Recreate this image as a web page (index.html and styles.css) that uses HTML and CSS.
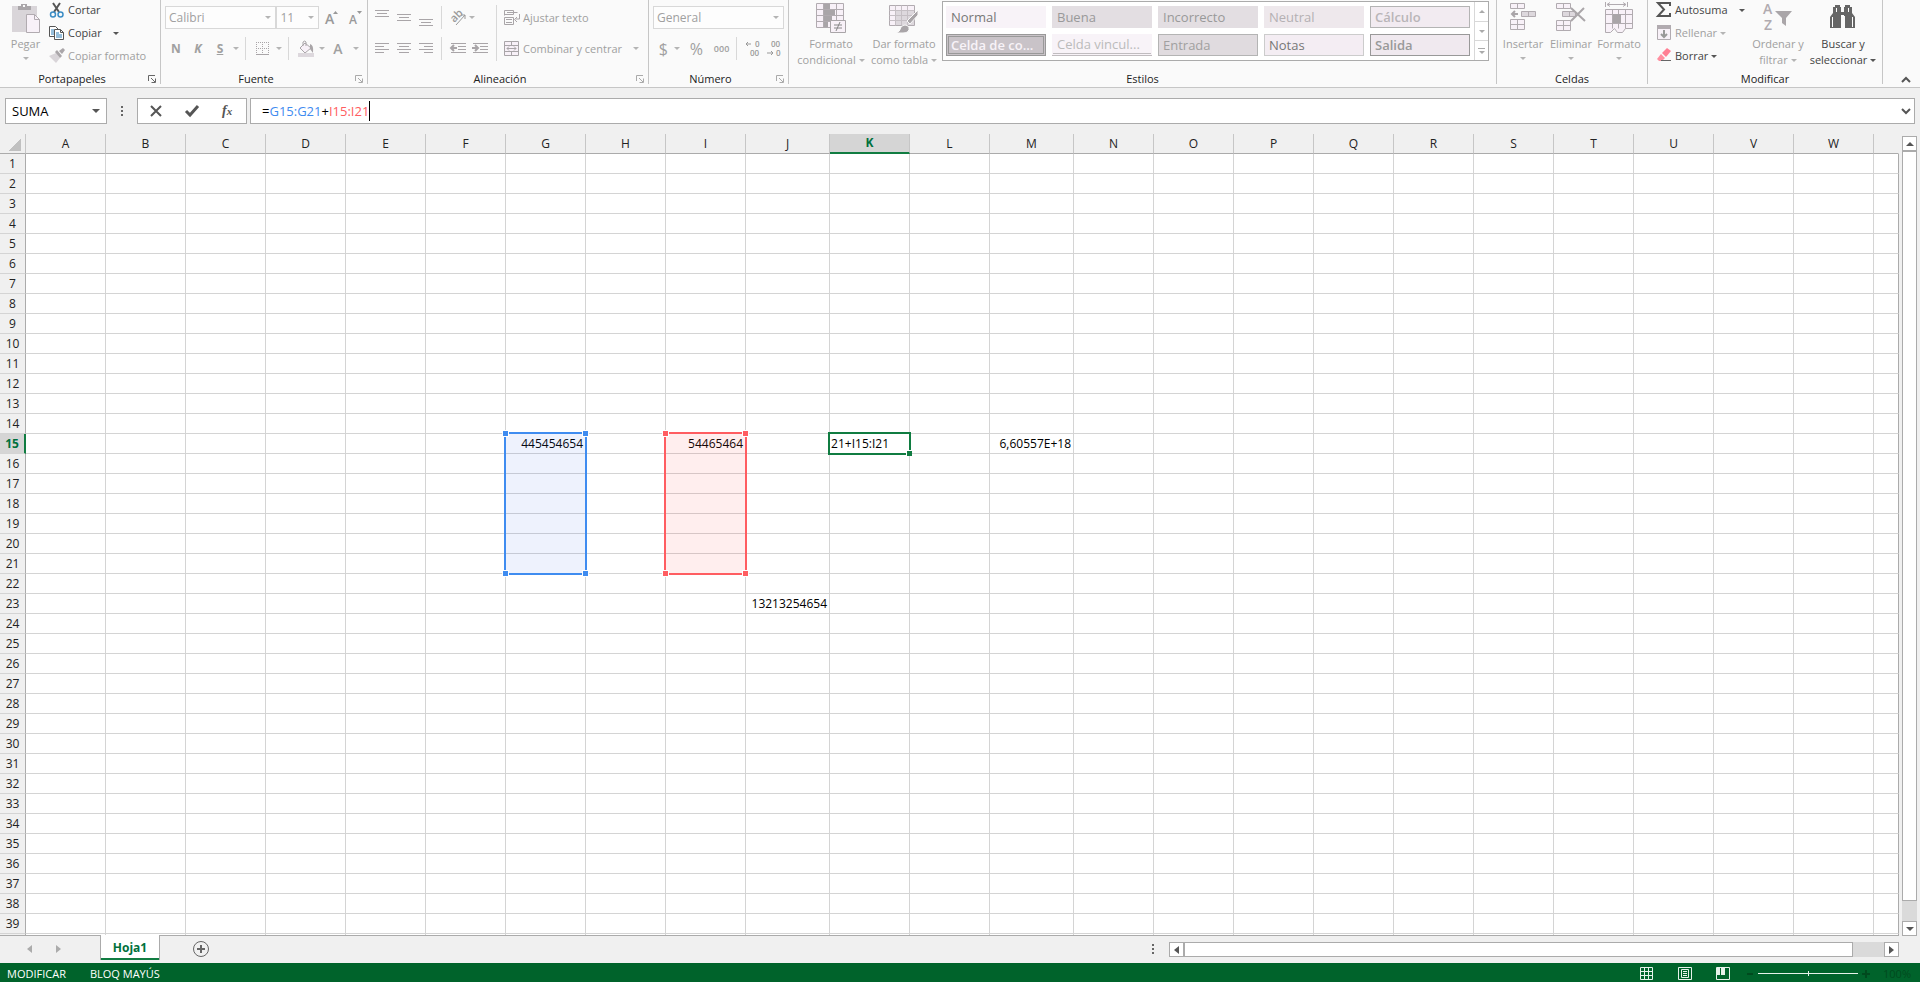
FILE: index.html
```html
<!DOCTYPE html>
<html lang="es">
<head>
<meta charset="utf-8">
<title>Hoja de cálculo</title>
<link rel="stylesheet" href="styles.css">
</head>
<body>
<header class="ribbon">
  <section class="group clipboard">
    <div class="group-body">
      <button class="big" disabled>
        <svg width="30" height="31" viewBox="0 0 30 31"><path d="M1 3h25v26H1z" fill="#d9d5d9"/><path d="M7 7V3h3V1h6v2h4v4z" fill="#aaa6a9"/><path d="M12 2h2v2h-2z" fill="#fafafa"/><path d="M15.500 11.500h8l5 5v13h-13z" fill="#f8f1f8" stroke="#b1abb0"/><path d="M23.500 11.500v5h5" fill="none" stroke="#b1abb0"/></svg>
        <span>Pegar</span><i class="caret"></i>
      </button>
      <div class="rows">
        <button class="tool">
          <svg width="16" height="16" viewBox="0 0 16 16" fill="none"><path d="M4 1l6 9M11 1L5 10" stroke="#555" stroke-width="2"/><circle cx="4" cy="12.500" r="2.500" stroke="#3c8dc5" stroke-width="1.500"/><circle cx="11.500" cy="12.500" r="2.500" stroke="#3c8dc5" stroke-width="1.500"/></svg>
          <span>Cortar</span></button>
        <button class="tool">
          <svg width="16" height="16" viewBox="0 0 16 16" fill="#fff" stroke="#555"><path d="M.500 1.500h6l3 3v7h-9z"/><path d="M2 5h3M2 7h3M2 9h3" stroke="#2f7fb8"/><path d="M5.500 4.500h6l3 3v7h-9z"/><path d="M11.500 4.500v3h3" fill="none"/><path d="M7 8h3M7 10h6M7 12h6" stroke="#2f7fb8"/></svg>
          <span>Copiar</span><i class="caret spaced"></i></button>
        <button class="tool" disabled>
          <svg width="16" height="16" viewBox="0 0 16 16"><path d="M0 8l7-3 4 5-4 5z" fill="#d9d5d9"/><path d="M6 4l2-2 5 6-2 2zM10 3l4-3 2 2-3 4z" fill="#aaa6a9"/></svg>
          <span>Copiar formato</span></button>
      </div>
    </div>
    <footer><h2>Portapapeles</h2><button class="launch on" aria-label="Opciones de portapapeles"><svg width="8" height="8" viewBox="0 0 8 8" fill="none" stroke="currentColor"><path d="M.500 6V.500H7M3 3l4 4M7.500 3.500v4h-4"/></svg></button></footer>
  </section>

  <section class="group font">
    <div class="group-body two">
      <div class="line">
        <label class="combo w-font"><select disabled aria-label="Fuente"><option>Calibri</option></select><i class="caret"></i></label>
        <label class="combo w-size"><select disabled aria-label="Tamaño"><option>11</option></select><i class="caret"></i></label>
        <button class="icon wide" disabled aria-label="Aumentar fuente"><svg width="16" height="16" viewBox="0 0 16 16"><text x="1" y="14" class="g16">A</text><path d="M9 4l2.500-3L14 4z" fill="#999"/></svg></button>
        <button class="icon" disabled aria-label="Reducir fuente"><svg width="16" height="16" viewBox="0 0 16 16"><text x="1" y="14" class="g13">A</text><path d="M9 1l2.500 3L14 1z" fill="#999"/></svg></button>
      </div>
      <div class="line">
        <button class="icon letter" disabled><b>N</b></button>
        <button class="icon letter" disabled><b><em>K</em></b></button>
        <button class="icon letter" disabled><b><u>S</u></b></button>
        <i class="caret"></i><i class="sep"></i>
        <button class="icon" disabled aria-label="Bordes"><svg width="14" height="14" viewBox="0 0 14 14" stroke="#a9a5a8" fill="none"><path d="M.500 0v13M12.500 0v13M6.500 0v13M0 .500h13M0 6.500h13" stroke-dasharray="1 1"/><path d="M0 12.500h13"/></svg></button>
        <i class="caret"></i><i class="sep"></i>
        <button class="icon" disabled aria-label="Color de relleno"><svg width="16" height="17" viewBox="0 0 16 17"><path d="M7 3l6 5-6 5-5-5z" fill="#f8f1f8" stroke="#a9a5a8"/><path d="M5 6V2q2-2 3 0v4" fill="none" stroke="#a9a5a8"/><path d="M12 4q4 1 3 9l-3-4z" fill="#a9a5a8"/><path d="M0 13h16v4H0z" fill="#ddd8dd"/></svg></button>
        <i class="caret"></i>
        <button class="icon wide" disabled aria-label="Color de fuente"><b class="color-a">A</b></button>
        <i class="caret"></i>
      </div>
    </div>
    <footer><h2>Fuente</h2><button class="launch" aria-label="Opciones de fuente"><svg width="8" height="8" viewBox="0 0 8 8" fill="none" stroke="currentColor"><path d="M.500 6V.500H7M3 3l4 4M7.500 3.500v4h-4"/></svg></button></footer>
  </section>

  <section class="group align">
    <div class="group-body">
      <div class="stack">
        <div class="line">
          <button class="icon" disabled aria-label="Alinear arriba"><svg width="14" height="16" viewBox="0 0 14 16" stroke="#a9a5a8"><path d="M0 .500h14M2 3.500h10M0 6.500h14"/></svg></button>
          <button class="icon" disabled aria-label="Alinear en medio"><svg width="14" height="16" viewBox="0 0 14 16" stroke="#a9a5a8"><path d="M0 4.500h14M2 7.500h10M0 10.500h14"/></svg></button>
          <button class="icon" disabled aria-label="Alinear abajo"><svg width="14" height="16" viewBox="0 0 14 16" stroke="#a9a5a8"><path d="M0 9.500h14M2 12.500h10M0 15.500h14"/></svg></button>
          <i class="sep"></i>
          <button class="icon" disabled aria-label="Orientación"><svg width="17" height="16" viewBox="0 0 17 16"><text x="1" y="11" class="g11" transform="rotate(-45 5 8)">ab</text><path d="M6 15L15 5M11 5h4v4" fill="none" stroke="#999"/></svg></button>
          <i class="caret"></i>
        </div>
        <div class="line">
          <button class="icon" disabled aria-label="Alinear a la izquierda"><svg width="14" height="12" viewBox="0 0 14 12" stroke="#a9a5a8"><path d="M0 .500h14M0 3.500h9M0 6.500h14M0 9.500h9"/></svg></button>
          <button class="icon" disabled aria-label="Centrar"><svg width="14" height="12" viewBox="0 0 14 12" stroke="#a9a5a8"><path d="M0 .500h14M2 3.500h10M0 6.500h14M2 9.500h10"/></svg></button>
          <button class="icon" disabled aria-label="Alinear a la derecha"><svg width="14" height="12" viewBox="0 0 14 12" stroke="#a9a5a8"><path d="M0 .500h14M5 3.500h9M0 6.500h14M5 9.500h9"/></svg></button>
          <i class="sep"></i>
          <button class="icon" disabled aria-label="Disminuir sangría"><svg width="16" height="12" viewBox="0 0 16 12" stroke="#a9a5a8" fill="none"><path d="M1 .500h15M8 3.500h8M8 6.500h8M1 9.500h15"/><path d="M7 5H1M4 2L1 5l3 3" stroke-width="2"/></svg></button>
          <button class="icon" disabled aria-label="Aumentar sangría"><svg width="16" height="12" viewBox="0 0 16 12" stroke="#a9a5a8" fill="none"><path d="M1 .500h15M8 3.500h8M8 6.500h8M1 9.500h15"/><path d="M0 5h6M3 2l3 3-3 3" stroke-width="2"/></svg></button>
        </div>
      </div>
      <i class="sep tall"></i>
      <div class="stack">
        <button class="tool line" disabled><svg width="16" height="16" viewBox="0 0 16 16" fill="none" stroke="#a9a5a8"><path d="M.500 5.500v-5h9v4h-9M.500 7.500h9v7h-9v-7M3 2.500h10.500M2 9.500h6M2 12.500h6M15.500 4v5h-4M13 7l-2.500 2.500L13 12"/></svg><span>Ajustar texto</span></button>
        <button class="tool line" disabled><svg width="16" height="16" viewBox="0 0 16 16" fill="#f8f1f8" stroke="#a9a5a8"><path d="M.500.500h14v14H.500zM.500 4.500h14M.500 10.500h14M7.500.500v4M7.500 10.500v4"/><path d="M3 7.500h9M5 5.500l-2 2 2 2M10 5.500l2 2-2 2" fill="none"/></svg><span>Combinar y centrar</span><i class="caret spaced"></i></button>
      </div>
    </div>
    <footer><h2>Alineación</h2><button class="launch" aria-label="Opciones de alineación"><svg width="8" height="8" viewBox="0 0 8 8" fill="none" stroke="currentColor"><path d="M.500 6V.500H7M3 3l4 4M7.500 3.500v4h-4"/></svg></button></footer>
  </section>

  <section class="group number">
    <div class="group-body two">
      <div class="line"><label class="combo grow"><select disabled aria-label="Formato de número"><option>General</option></select><i class="caret"></i></label></div>
      <div class="line">
        <button class="icon" disabled><span class="glyph">$</span></button><i class="caret"></i>
        <button class="icon percent" disabled><span class="glyph">%</span></button>
        <button class="icon thousand" disabled><span>000</span></button>
        <i class="sep"></i>
        <button class="icon" disabled aria-label="Aumentar decimales"><svg width="16" height="16" viewBox="0 0 16 16"><path d="M1 3h5M3 1L1 3l2 2" stroke="#999" fill="none"/><text x="10" y="6" class="g9">0</text><text x="5" y="15" class="g9">00</text></svg></button>
        <button class="icon" disabled aria-label="Disminuir decimales"><svg width="16" height="16" viewBox="0 0 16 16"><path d="M1 12h6M5 10l2 2-2 2" stroke="#999" fill="none"/><text x="5" y="6" class="g9">00</text><text x="10" y="15" class="g9">0</text></svg></button>
      </div>
    </div>
    <footer><h2>Número</h2><button class="launch" aria-label="Opciones de número"><svg width="8" height="8" viewBox="0 0 8 8" fill="none" stroke="currentColor"><path d="M.500 6V.500H7M3 3l4 4M7.500 3.500v4h-4"/></svg></button></footer>
  </section>

  <section class="group styles">
    <div class="group-body">
      <button class="big" disabled>
        <svg width="30" height="31" viewBox="0 0 30 31"><path d="M.500.500h27v24H.500zM.500 6.500h27M.500 12.500h27M.500 18.500h27M7.500.500v24M20.500.500v24" fill="#f8f1f8" stroke="#b1abb0"/><path d="M8 1h6v5H8zM8 7h11v5H8zM8 13h8v5H8zM8 19h4v5H8z" fill="#a9a5a8"/><path d="M14.500 17.500h15v12h-15z" fill="#f8f1f8" stroke="#a9a5a8"/><path d="M18 22h8M18 25h8M24 19l-4 9" stroke="#888"/></svg>
        <span>Formato<br>condicional<i class="caret"></i></span>
      </button>
      <button class="big second" disabled>
        <svg width="30" height="31" viewBox="0 0 30 31"><path d="M.500 2.500h25v20H.500z" fill="#f8f1f8" stroke="#b1abb0"/><path d="M7 8h18v14H7z" fill="#ddd8dd"/><path d="M.500 7.500h25M.500 12.500h25M.500 17.500h25M6.500 2.500v20M12.500 2.500v20M18.500 2.500v20" stroke="#c5bfc4"/><path d="M29 7v5l-8 9-3-3z" fill="#a9a5a8" stroke="#fafafa"/><path d="M7 30q4-1 5-6 4-4 8 0 1 6-6 6z" fill="#a9a5a8" stroke="#fafafa"/></svg>
        <span>Dar formato<br>como tabla<i class="caret"></i></span>
      </button>
      <div class="gallery">
        <div class="swatches">
          <button class="sw normal">Normal</button><button class="sw good">Buena</button><button class="sw bad">Incorrecto</button><button class="sw neutral">Neutral</button><button class="sw calc">Cálculo</button>
          <button class="sw check">Celda de co...</button><button class="sw linked">Celda vincul...</button><button class="sw entry">Entrada</button><button class="sw notes">Notas</button><button class="sw output">Salida</button>
        </div>
        <div class="gallery-nav"><button aria-label="Arriba"><i class="caret up"></i></button><button aria-label="Abajo"><i class="caret"></i></button><button aria-label="Más" class="more"><i class="caret"></i></button></div>
      </div>
    </div>
    <footer><h2>Estilos</h2></footer>
  </section>

  <section class="group cells">
    <div class="group-body">
      <button class="big" disabled>
        <svg width="28" height="31" viewBox="0 0 28 31" fill="#f8f1f8" stroke="#b1abb0"><path d="M1.500.500h14v5h-14zM8.500.500v5M1.500 16.500h14v10h-14zM8.500 16.500v10M1.500 21.500h14"/><path d="M12.500 8.500h14v5h-14zM19.500 8.500v5" fill="#ddd8dd"/><path d="M9 11H3M6 8l-3 3 3 3" fill="none" stroke="#a9a5a8" stroke-width="2"/></svg>
        <span>Insertar</span><i class="caret"></i></button>
      <button class="big" disabled>
        <svg width="30" height="31" viewBox="0 0 30 31" fill="#f8f1f8" stroke="#b1abb0"><path d="M.500.500h14v5h-14zM7.500.500v5M.500 17.500h14v10h-14zM7.500 17.500v10M.500 22.500h14"/><path d="M6.500 8.500h13v5h-13zM13.500 8.500v5" fill="#ddd8dd"/><path d="M15 5l14 13M28 5L15 18" fill="none" stroke="#aaa6a9" stroke-width="2"/></svg>
        <span>Eliminar</span><i class="caret"></i></button>
      <button class="big" disabled>
        <svg width="29" height="31" viewBox="0 0 29 31" fill="#f8f1f8" stroke="#b1abb0"><path d="M.500 6.500h27v19h-7l-3 4h-5l-3-4-4 4h-5zM.500 11.500h27M.500 20.500h27M7.500 6.500v19M13.500 6.500v19M20.500 6.500v19"/><path d="M8 11h8v9H8z" fill="#a9a5a8" stroke="none"/><path d="M.500 -1v5M22.500 -1v5M2 1.500h19M5 -.500l-3 2 3 2M18 -.500l3 2-3 2" fill="none"/></svg>
        <span>Formato</span><i class="caret"></i></button>
    </div>
    <footer><h2>Celdas</h2></footer>
  </section>

  <section class="group edit">
    <div class="group-body">
      <div class="rows">
        <button class="tool"><svg width="16" height="16" viewBox="0 0 16 16" fill="none" stroke="#555" stroke-width="2"><path d="M14 4V1H2l6 6.500L2 14h12v-3"/></svg><span>Autosuma</span><i class="caret spaced"></i></button>
        <button class="tool" disabled><svg width="16" height="16" viewBox="0 0 16 16"><path d="M1.500.500h13v14h-13z" fill="#f8f1f8" stroke="#b1abb0"/><path d="M1 0h14v4H1z" fill="#b1abb0"/><path d="M8 5v7M5 9l3 3 3-3" fill="none" stroke="#999" stroke-width="2"/></svg><span>Rellenar</span><i class="caret"></i></button>
        <button class="tool"><svg width="16" height="16" viewBox="0 0 16 16"><path d="M6 5l5-5 4 3-5 6z" fill="#ff7f93"/><path d="M5 6l4 4-3 3H3L1 11z" fill="#ff8fa0"/><path d="M5 12.500h10" stroke="#666"/></svg><span>Borrar</span><i class="caret"></i></button>
      </div>
      <button class="big sort" disabled>
        <svg width="30" height="31" viewBox="0 0 30 31"><text x="0" y="11" class="az">A</text><text x="1" y="27" class="az">Z</text><path d="M12 8h17l-6 7v8l-4-3v-5z" fill="#aaa6a9"/></svg>
        <span>Ordenar y<br>filtrar<i class="caret"></i></span></button>
      <button class="big">
        <svg width="28" height="31" viewBox="0 0 28 31" fill="#666"><path d="M6 2h5v2h1v5h3V4h1V2h5v2h2v6l3 4v11H16V13h-4v12H1V14l3-4V4h2z"/><path d="M3.500 14v10M23.500 14v10M7.500 5v4M19.500 5v4" stroke="#fff"/><path d="M12 12h3v2h-3z" fill="#fff"/></svg>
        <span>Buscar y<br>seleccionar<i class="caret"></i></span></button>
    </div>
    <footer><h2>Modificar</h2></footer>
  </section>
  <button class="collapse" aria-label="Contraer la cinta"><svg width="10" height="7" viewBox="0 0 10 7" fill="none" stroke="#555" stroke-width="2"><path d="M1 6l4-4 4 4"/></svg></button>
</header>

<div class="formula-bar">
  <label class="name-box"><input type="text" value="SUMA" aria-label="Cuadro de nombres"><i class="caret"></i></label>
  <i class="dots"></i>
  <div class="actions">
    <button aria-label="Cancelar"><svg width="12" height="12" viewBox="0 0 12 12" stroke="#555" stroke-width="2"><path d="M1 1l10 10M11 1L1 11"/></svg></button>
    <button aria-label="Introducir"><svg width="14" height="12" viewBox="0 0 14 12" fill="none" stroke="#555" stroke-width="3"><path d="M1 6l4 4 8-9"/></svg></button>
    <button aria-label="Insertar función" class="fx">f<small>x</small></button>
  </div>
  <div class="formula">
    <div class="formula-text" role="textbox" contenteditable="true" aria-label="Barra de fórmulas">=<span class="ref-blue">G15:G21</span>+<span class="ref-red">I15:I21</span><i class="cursor"></i></div>
    <button aria-label="Expandir barra"><svg width="10" height="7" viewBox="0 0 10 7" fill="none" stroke="#555" stroke-width="2"><path d="M1 1l4 4 4-4"/></svg></button>
  </div>
</div>

<main class="sheet">
  <div class="grid-view"><table class="grid" id="grid"></table></div>
  <div class="vscroll">
    <button aria-label="Desplazar arriba"><i class="caret up"></i></button>
    <div class="vthumb"></div>
    <button class="last" aria-label="Desplazar abajo"><i class="caret"></i></button>
  </div>
</main>

<nav class="tabs">
  <button class="nav-arrow" aria-label="Hoja anterior"><i class="side left"></i></button>
  <button class="nav-arrow" aria-label="Hoja siguiente"><i class="side right"></i></button>
  <button class="tab">Hoja1</button>
  <button class="add" aria-label="Hoja nueva"><svg width="16" height="16" viewBox="0 0 16 16" fill="none" stroke="#666"><circle cx="8" cy="8" r="7.500"/><path d="M8 4v8M4 8h8" stroke-width="2"/></svg></button>
  <i class="dots"></i>
  <div class="hscroll">
    <button aria-label="Desplazar a la izquierda"><i class="side left"></i></button>
    <div class="hthumb"></div>
    <button class="last" aria-label="Desplazar a la derecha"><i class="side right"></i></button>
  </div>
</nav>

<footer class="status">
  <span>MODIFICAR</span><span>BLOQ MAYÚS</span>
  <div class="views">
    <button aria-label="Normal"><svg width="14" height="13" viewBox="0 0 14 13" fill="none" stroke="#e6f2ea"><path d="M.500.500h12v12H.500zM4.500.500v12M8.500.500v12M.500 4.500h12M.500 8.500h12"/></svg></button>
    <button aria-label="Diseño de página"><svg width="14" height="13" viewBox="0 0 14 13" fill="none" stroke="#e6f2ea"><path d="M.500.500h13v12H.500zM3.500 2.500h7v8h-7zM5 4.500h4M5 6.500h4M5 8.500h4"/></svg></button>
    <button aria-label="Salto de página"><svg width="14" height="13" viewBox="0 0 14 13" fill="none" stroke="#e6f2ea"><path d="M.500.500h13v12H.500z"/><path d="M1 1h3v7H1zM5 1h4v7H5z" fill="#e6f2ea" stroke="none"/></svg></button>
  </div>
  <div class="zoom">
    <button aria-label="Alejar"><svg width="8" height="8" viewBox="0 0 8 8"><path d="M1 3h6v2H1z" fill="#004a1e"/></svg></button>
    <input type="range" min="0" max="200" value="100" aria-label="Zoom">
    <button aria-label="Acercar"><svg width="8" height="8" viewBox="0 0 8 8"><path d="M0 3h3V0h2v3h3v2H5v3H3V5H0z" fill="#004a1e"/></svg></button>
    <span class="pct">100%</span>
  </div>
</footer>
<script src="grid.js"></script>
</body>
</html>
```
FILE: styles.css
```css
* { box-sizing: border-box; }
body {
  margin: 0; height: 100vh; display: flex; flex-direction: column; overflow: hidden;
  background: #f0f0f0; color: #444; font: 11px/16px "Open Sans", "Noto Sans", sans-serif;
}
button, input, select { font: inherit; color: inherit; margin: 0; padding: 0; border: 0; background: none; border-radius: 0; }
button { display: flex; align-items: center; justify-content: center; }
button:disabled, select:disabled { color: #a0a0a0; opacity: 1; }
svg { display: block; flex: none; overflow: visible; }
h2 { margin: 0; font: inherit; color: #222; }

.caret { flex: none; display: inline-block; width: 0; height: 0; border: 3px solid transparent; border-top-color: #555; border-bottom: 0; }
.caret.up { border-top: 0; border-bottom: 3px solid #777; }
:disabled .caret, .icon ~ .caret, .combo .caret { border-top-color: #b4b4b4; }
.caret.spaced { margin-left: 8px; }
.side { width: 0; height: 0; border: 4px solid transparent; }
.side.left { border-right: 5px solid #555; border-left: 0; }
.side.right { border-left: 5px solid #555; border-right: 0; }

/* Ribbon */
.ribbon { flex: none; display: flex; height: 88px; background: #fafafa; border-bottom: 1px solid #c6c6c6; }
.group { flex: none; height: 84px; border-right: 1px solid #c6c6c6; display: flex; flex-direction: column; }
.group-body { flex: none; display: flex; height: 71px; }
.group footer { flex: none; display: flex; align-items: center; }
.group h2 { flex: 1; text-align: center; }
.launch { width: 16px; height: 13px; color: #aaa; }
.launch.on { color: #666; }
.clipboard { width: 161px; }
.font { width: 207px; }
.align { width: 281px; }
.number { width: 140px; }
.styles { flex: 1; }
.cells { width: 151px; }
.edit { width: 235px; }

.big { flex-direction: column; justify-content: flex-start; padding-top: 3px; }
.big span { margin-top: 2px; text-align: center; white-space: nowrap; }
.big span .caret { margin: 0 0 2px 3px; }
.big > .caret { margin-top: 5px; }
.clipboard .big { width: 41px; margin-left: 5px; }
.rows { display: flex; flex-direction: column; gap: 1px; margin-top: -1px; }
.tool { height: 22px; gap: 3px; justify-content: flex-start; white-space: nowrap; }
.clipboard .rows { margin-left: 3px; }

.two, .stack { display: flex; flex-direction: column; gap: 8px; padding-top: 6px; }
.line { display: flex; align-items: center; height: 23px; }
.sep { width: 1px; height: 23px; background: #d8d8d8; margin: 0 6px; }
.sep.tall { height: 56px; margin: 5px 7px 0 5px; }
.icon { width: 22px; height: 22px; }
.icon.wide { width: 26px; }
.icon.percent { width: 36px; }
.combo { display: grid; height: 23px; border: 1px solid #d8d8d8; background: #fdfdfd; align-items: center; }
.combo select, .combo .caret { grid-area: 1 / 1; }
.combo select { appearance: none; padding-left: 3px; width: 100%; font-size: 12px; }
.combo .caret { justify-self: end; margin-right: 4px; }
.font .group-body { padding-left: 4px; }
.w-font { width: 112px; }
.w-size { width: 43px; }
.letter { font-size: 12px; }
.font .icon ~ .caret { margin-left: 2px; }
.glyph { font-size: 16px; }
.color-a { font-size: 14px; font-weight: 600; }
.icon.thousand { width: 18px; font-size: 9px; font-weight: 600; }
.g16, .g13, .g11, .g9, .az { fill: #999; font-size: 14px; font-weight: 600; }
.g13 { font-size: 12px; }
.g11 { font-size: 11px; }
.g9 { font-size: 8px; }
.az { fill: #b1abb0; font-size: 14px; }
.align .group-body { padding-left: 3px; }
.align .stack .sep { margin: 0 5px 0 4px; }
.number .group-body { padding: 6px 4px 0; }
.grow { flex: 1; }

.styles .group-body { padding-left: 4px; }
.styles .big { width: 76px; }
.styles .big.second { width: 70px; }
.gallery { display: flex; margin: 1px 7px 0 3px; height: 60px; flex: 1; border: 1px solid #ababab; background: #fff; }
.swatches { flex: 1; display: grid; grid-template-columns: repeat(5, 1fr); grid-template-rows: 22px 22px; gap: 6px; padding: 4px 4px 4px 3px; }
.sw { justify-content: flex-start; padding-left: 4px; font-size: 13px; line-height: 18px; background: #f8f3f8; border: 1px solid transparent; color: #777; white-space: nowrap; overflow: hidden; }
.sw.good, .sw.bad { background: #e3dee2; color: #999; }
.sw.neutral { background: #eee8ec; color: #b4b0b3; }
.sw.calc { background: #f2ebf1; border-color: #b4b4b4; color: #b9b5b8; font-weight: 600; }
.sw.check { background: #c9c3c8; border: 3px double #999; padding-left: 2px; color: #f8f3f8; font-weight: 600; }
.sw.linked { border-bottom: 3px double #c0bcbf; color: #bbb; }
.sw.entry { background: #e0dbdf; border-color: #b4b4b4; color: #a0a0a0; }
.sw.notes { background: #f4edf3; border-color: #ccc; }
.sw.output { background: #f0e9ef; border-color: #999; color: #999; font-weight: 600; }
.gallery-nav { width: 14px; display: flex; flex-direction: column; border-left: 1px solid #d8d8d8; }
.gallery-nav button { flex: 1; }
.gallery-nav button + button { border-top: 1px solid #d8d8d8; }
.gallery-nav .caret { border-top-color: #aaa; }
.gallery-nav .caret.up { border-bottom-color: #aaa; }
.gallery-nav .more { flex-direction: column; gap: 2px; }
.gallery-nav .more::before { content: ""; width: 7px; height: 1px; background: #aaa; }

.cells .group-body { padding-left: 2px; }
.cells .big { width: 48px; }
.edit .rows { margin-left: 8px; width: 92px; }
.edit .big { width: 70px; }
.edit .big.sort { width: 60px; }
.collapse { margin: 72px 9px 0 18px; width: 10px; height: 14px; }

/* Formula bar */
.formula-bar { flex: none; display: flex; height: 46px; padding: 10px 5px; color: #000; font-size: 13px; }
.name-box, .actions, .formula { display: flex; align-items: center; height: 26px; background: #fff; border: 1px solid #ababab; }
.name-box { width: 102px; padding: 0 6px; }
.name-box input { flex: 1; min-width: 0; outline: 0; }
.name-box .caret { border-width: 4px; border-bottom-width: 0; }
.dots { flex: none; width: 2px; height: 10px; background: repeating-linear-gradient(#666 0 2px, transparent 2px 4px); }
.formula-bar .dots { margin: 8px 14px; }
.actions { width: 110px; padding-right: 1px; }
.actions button { flex: 1; height: 24px; }
.fx { font: italic 700 14px/16px "Liberation Serif", serif; color: #555; }
.fx small { font-size: 11px; }
.formula { flex: 1; margin-left: 3px; padding: 0 2px 0 11px; }
.formula-text { flex: 1; display: flex; align-items: center; outline: 0; }
.formula button { width: 12px; }
.ref-blue { color: #3f8cf0; }
.ref-red { color: #ff5d61; }
.cursor { width: 1px; height: 20px; background: #000; }

/* Sheet */
.sheet { flex: 1; min-height: 0; display: flex; }
.grid-view { flex: 1; min-width: 0; overflow: hidden; border-bottom: 1px solid #ababab; }
.grid { width: 100%; table-layout: fixed; border-collapse: separate; border-spacing: 0; font-size: 12px; line-height: 18px; color: #000; }
.grid th, .grid td { height: 20px; padding: 1px 0 0; border-right: 1px solid #d4d4d4; border-bottom: 1px solid #d4d4d4; white-space: nowrap; }
.grid td { background: #fff; text-align: right; padding-right: 2px; position: relative; }
.grid td:last-child { border-right-color: #ababab; }
.grid th { background: #f0f0f0; font-weight: 400; color: #222; }
.grid thead th { border-bottom-color: #ababab; border-right-color: #c6c6c6; padding: 0; }
.grid thead th:last-child { border-right-color: #f0f0f0; }
.grid tbody th { border-right-color: #ababab; }
.grid .picked { background: #d5d5d5; color: #00703c; font-weight: 700; }
.grid thead .picked { border-bottom: 2px solid #107c41; }
.grid tbody .picked { border-right: 2px solid #107c41; }
.grid .rowhead { width: 26px; }
.grid .col { width: 80px; }
.grid .col.wide { width: 84px; }
.corner { display: block; width: 12px; height: 12px; margin: 3px 0 0 9px; background: linear-gradient(135deg, transparent 50%, #c0c0c0 50%); }

.range { position: absolute; z-index: 1; left: -2px; top: -2px; width: calc(100% + 4px); height: 143px; border: 2px solid var(--ink); background: var(--tint); }
.range.blue { --ink: #3f8cf0; --tint: rgba(65, 115, 235, 0.09); }
.range.red { --ink: #ff5d61; --tint: rgba(255, 70, 70, 0.09); }
.range i { position: absolute; width: 7px; height: 7px; background: var(--ink); border: 1px solid #fff; }
.range .tl { left: -4px; top: -4px; }
.range .tr { right: -4px; top: -4px; }
.range .bl { left: -4px; bottom: -4px; }
.range .br { right: -4px; bottom: -4px; }
.editor { position: absolute; z-index: 1; left: -2px; top: -2px; width: calc(100% + 4px); height: 23px; border: 2px solid #107c41; background: #fff; }
.editor span { display: flex; justify-content: flex-end; overflow: hidden; width: 58px; margin-left: 1px; line-height: 20px; }
.editor i { position: absolute; right: -3px; bottom: -3px; width: 6px; height: 6px; background: #107c41; border: solid #fff; border-width: 1px 0 0 1px; }

.vscroll { flex: none; width: 15px; margin: 2px 3px 0; display: flex; flex-direction: column; background: #dadada; }
.vscroll button, .vthumb { border: 1px solid #ababab; background: #fff; }
.vscroll button { height: 15px; }
.vscroll .caret { border-width: 4px; border-bottom-width: 0; }
.vscroll .caret.up { border-width: 0 4px 4px; border-bottom-color: #555; }
.vthumb { flex: 1; margin-bottom: 20px; }

/* Sheet tabs */
.tabs { flex: none; display: flex; height: 27px; padding: 0 21px 0 15px; }
.nav-arrow { width: 29px; height: 25px; }
.nav-arrow .left { border-right-color: #ababab; }
.nav-arrow .right { border-left-color: #ababab; }
.tab { width: 60px; height: 25px; margin: -1px 0 0 27px; background: #fff; border: solid #ababab; border-width: 0 1px; box-shadow: inset 0 -2px #107c41; color: #00703c; font-size: 12px; font-weight: 700; position: relative; }
.add { margin: 5px auto 0 33px; height: 16px; }
.tabs .dots { margin: 8px 15px 0 0; }
.hscroll { width: calc(39% - 5px); height: 15px; margin-top: 6px; display: flex; background: #dadada; }
.hscroll button, .hthumb { border: 1px solid #ababab; background: #fff; }
.hscroll button { width: 15px; }
.hthumb { flex: 1; margin-right: 31px; }

/* Status bar */
.status { flex: none; display: flex; align-items: center; gap: 24px; height: 19px; padding: 2px 9px 0 7px; background: #00632b; color: #fff; }
.views { display: flex; gap: 24px; margin-left: auto; }
.zoom { display: flex; align-items: center; gap: 4px; margin-left: -8px; }
.zoom input { appearance: none; width: 100px; height: 1px; background: #e6f2ea; }
.zoom input::-webkit-slider-thumb { appearance: none; width: 1px; height: 5px; background: #e6f2ea; }
.pct { margin-left: 9px; color: #004a1e; }
```
FILE: grid.js
```js
const columns = "ABCDEFGHIJKLMNOPQRSTUVW".split("");
const rowCount = 39;
const wide = ["J", "M"];
const handles = '<i class="tl"></i><i class="tr"></i><i class="bl"></i><i class="br"></i>';
const cells = {
  G15: '445454654<div class="range blue">' + handles + "</div>",
  I15: '54465464<div class="range red">' + handles + "</div>",
  K15: '<div class="editor"><span>=G15:G21+I15:I21</span><i></i></div>',
  M15: "6,60557E+18",
  J23: "13213254654"
};

let html = '<thead><tr><th class="rowhead"><i class="corner"></i></th>';
for (const c of columns) {
  html += `<th class="col${wide.includes(c) ? " wide" : ""}${c === "K" ? " picked" : ""}">${c}</th>`;
}
html += "<th></th></tr></thead><tbody>";
for (let r = 1; r <= rowCount + 1; r++) {
  html += `<tr><th class="${r === 15 ? "picked" : ""}">${r <= rowCount ? r : ""}</th>`;
  for (const c of columns) html += `<td>${cells[c + r] || ""}</td>`;
  html += "<td></td></tr>";
}
document.getElementById("grid").innerHTML = html + "</tbody>";
```
